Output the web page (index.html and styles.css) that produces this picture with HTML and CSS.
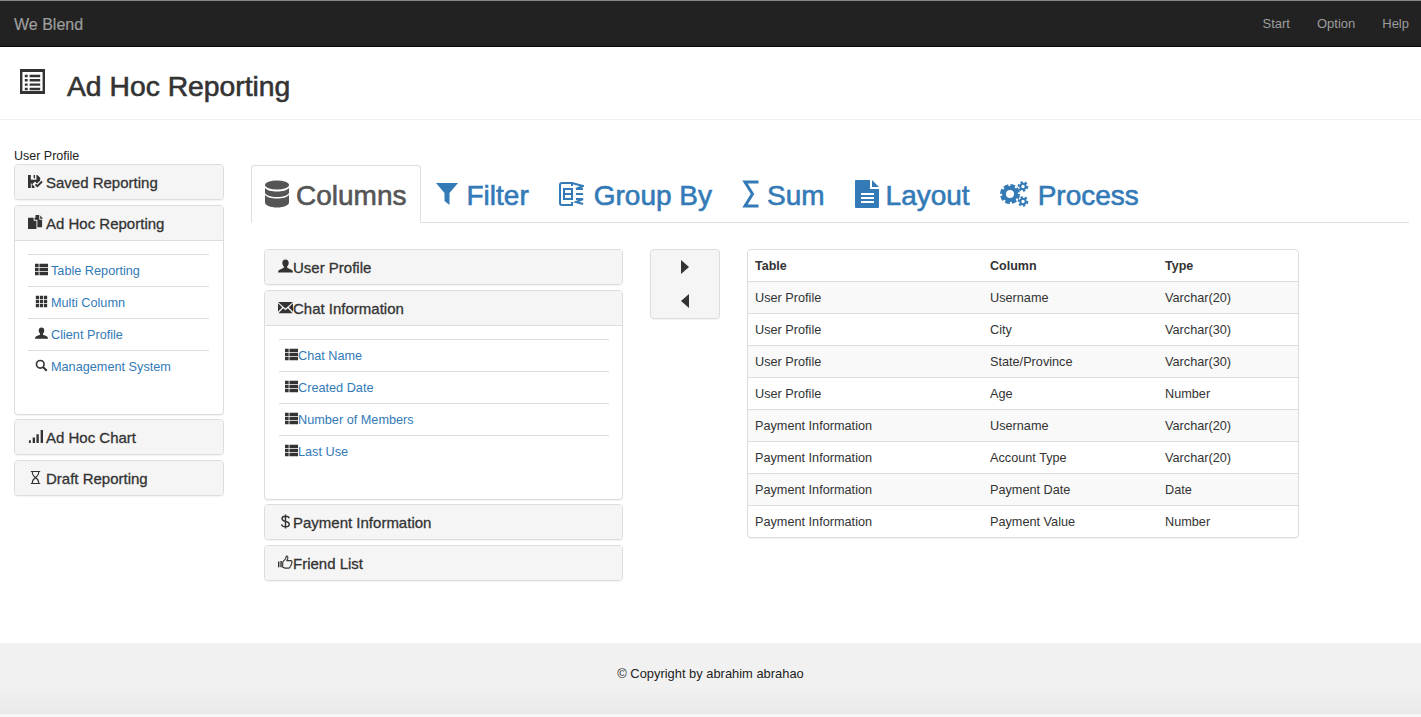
FILE: index.html
```html
<!DOCTYPE html>
<html>
<head>
  <meta charset="UTF-8">
  <title>We Blend</title>
  <link rel="stylesheet" href="styles.css">
</head>
<body>
  <svg class="sprite" width="0" height="0">
    <symbol id="i-listalt" viewBox="0 0 26 26"><path fill-rule="evenodd" d="M0 0h26v26H0zM2.500 3v20h21V3z"/><path d="M5 6h3v2.500H5zM10 6h11v2.500H10zM5 10.500h3V13H5zM10 10.500h11V13H10zM5 15h3v2.500H5zM10 15h11v2.500H10zM5 19.500h3V22H5zM10 19.500h11V22H10z"/></symbol>
    <symbol id="i-saved" viewBox="0 0 16 16"><path d="M0 1h10l3 3v3l-3.500 3L7.500 8 4.500 11l2.500 2.500V15H4V10H3v5H0zM3 1v5h6V1H7.500v3.500H6V1z" fill-rule="evenodd"/><path d="M8 11l2 2 5-5" fill="none" stroke="currentColor" stroke-width="2"/></symbol>
    <symbol id="i-copy" viewBox="0 0 16 16"><path d="M0 3h6v3h3v9H0z"/><path d="M7 3v2h3v8h5V5h-3V0H8v3zM13 .5V4h3z"/></symbol>
    <symbol id="i-thlist" viewBox="0 0 16 16"><path d="M0 1h4.500v4.200H0zM5.500 1H16v4.200H5.500zM0 6h4.500v4.200H0zM5.500 6H16v4.200H5.500zM0 11h4.500v4.200H0zM5.500 11H16v4.200H5.500z"/></symbol>
    <symbol id="i-th" viewBox="0 0 16 16"><path d="M1 1h4v4.200H1zM6 1h4v4.200H6zM11 1h4v4.200h-4zM1 6h4v4.200H1zM6 6h4v4.200H6zM11 6h4v4.200h-4zM1 11h4v4.200H1zM6 11h4v4.200H6zM11 11h4v4.200h-4z"/></symbol>
    <symbol id="i-user" viewBox="0 0 16 16"><path d="M8 .5c2.200 0 3.400 1.500 3.400 3.700 0 1.600-.7 3-1.600 3.700v1.500l4 1.700c1.300.6 2.200 1.200 2.200 3.400H0c0-2.200.9-2.800 2.200-3.400l4-1.700V7.900c-.9-.7-1.600-2.100-1.600-3.700C4.600 2 5.800.5 8 .5z"/></symbol>
    <symbol id="i-search" viewBox="0 0 16 16"><circle cx="6.500" cy="6.500" r="4.700" fill="none" stroke="currentColor" stroke-width="2"/><path d="M10 10l4.500 4.500" fill="none" stroke="currentColor" stroke-width="2.600"/></symbol>
    <symbol id="i-signal" viewBox="0 0 16 16"><path d="M1 12h2v3H1zM5 9h2.500v6H5zM9 5.500h2.500V15H9zM13.500 1H16v14h-2.500z"/></symbol>
    <symbol id="i-hourglass" viewBox="0 0 16 16"><path d="M3 1h10v1.200h-1c0 3-1.500 4.500-3 5.800 1.500 1.300 3 2.800 3 5.800h1V15H3v-1.200h1c0-3 1.500-4.500 3-5.800-1.500-1.300-3-2.800-3-5.800H3zM5.200 2.200C5.200 5 6.700 6.300 8 7.300c1.300-1 2.800-2.300 2.800-5.100zM8 9c-1 .8-2.500 2-2.800 4.800h5.600C10.500 11 9 9.800 8 9z" fill-rule="evenodd"/></symbol>
    <symbol id="i-database" viewBox="0 0 24 27"><ellipse cx="12" cy="4.500" rx="12" ry="4.500"/><path d="M0 7.500C2 10 6.500 11 12 11s10-1 12-3.500V12c0 2.500-5.400 4.500-12 4.500S0 14.500 0 12zM0 14.500C2 17 6.500 18 12 18s10-1 12-3.500V22c0 2.800-5.400 5-12 5S0 24.800 0 22z"/></symbol>
    <symbol id="i-filter" viewBox="0 0 22 24"><path d="M0 1h22l-8.500 10v12L8.500 19v-8z"/></symbol>
    <symbol id="i-group" viewBox="0 0 25 24"><g fill="none" stroke="currentColor" stroke-width="2"><path d="M13 4V1H3a2 2 0 0 0-2 2v18a2 2 0 0 0 2 2h10v-3"/><path d="M5 7h8v10H5zM5 12h8"/><path d="M13 1l11 3-7 3h7M24 12h-7M17 17h7l-7 3 7 2"/></g></symbol>
    <symbol id="i-sigma" viewBox="0 0 17 28"><path d="M16.500 2H3l7.500 12L3 26h13.500" fill="none" stroke="currentColor" stroke-width="3"/></symbol>
    <symbol id="i-file" viewBox="0 0 24 28"><path fill-rule="evenodd" d="M1 0h14v9h9v18a1 1 0 0 1-1 1H1a1 1 0 0 1-1-1V1a1 1 0 0 1 1-1zM6 13v2h13v-2zM6 17v2h13v-2zM6 21v2h13v-2z"/><path d="M17 0l7 7h-7z"/></symbol>
    <symbol id="i-cogs" viewBox="0 0 30 26"><g fill="none" stroke="currentColor"><circle cx="10" cy="13" r="6" stroke-width="4"/><circle cx="10" cy="13" r="8.500" stroke-width="3" stroke-dasharray="4.700 2"/><circle cx="23" cy="5.500" r="2.700" stroke-width="2"/><circle cx="23" cy="5.500" r="4.300" stroke-width="2" stroke-dasharray="2.300 2"/><circle cx="23" cy="20.500" r="2.700" stroke-width="2"/><circle cx="23" cy="20.500" r="4.300" stroke-width="2" stroke-dasharray="2.300 2"/></g></symbol>
    <symbol id="i-mail" viewBox="0 0 16 16"><path d="M0 2h16L8 9zM0 3.500l4.500 4.200L0 12.500zM16 3.500l-4.500 4.200 4.500 4.800zM5.500 8.700L8 11l2.500-2.300 5 5.300H.5z"/></symbol>
    <symbol id="i-usd" viewBox="0 0 16 16"><path d="M12 4.500C11.500 3 10 2.400 8 2.400c-2.300 0-3.700 1-3.700 2.700 0 3.900 7.700 1.700 7.700 5.800 0 1.800-1.700 2.800-4 2.800-2.300 0-3.800-.9-4.300-2.600M8 .5v15" fill="none" stroke="currentColor" stroke-width="1.500"/></symbol>
    <symbol id="i-thumb" viewBox="0 0 16 16"><path d="M0 7h1.500v6H0zM2.500 6.500h1.500V13H2.500z"/><path d="M5 7.500l3-3.500c.5-1 .5-2 1-3 1.500 0 1.800 1.500 1.300 3l-.8 2h4c1.500 0 1.800 1.500 1 2.300.5 1 0 1.800-.5 2.200 0 1-.5 1.500-1 1.800 0 1-.7 1.700-1.500 1.700H7.500L5 13z" fill="none" stroke="currentColor" stroke-width="1.200"/></symbol>
    <symbol id="i-right" viewBox="0 0 8 14"><path d="M0 0l8 7-8 7z"/></symbol>
    <symbol id="i-left" viewBox="0 0 8 14"><path d="M8 0L0 7l8 7z"/></symbol>
  </svg>

  <nav class="navbar">
    <a class="brand">We Blend</a>
    <ul class="navlinks">
      <li>Start</li>
      <li>Option</li>
      <li>Help</li>
    </ul>
  </nav>

  <header class="pagehead">
    <svg class="pagehead-icon"><use href="#i-listalt"/></svg>
    <h1>Ad Hoc Reporting</h1>
  </header>

  <main class="main">
    <aside class="sidebar">
      <div class="sidebar-title">User Profile</div>
      <div class="panel">
        <div class="panel-heading"><svg class="ico ico-gap"><use href="#i-saved"/></svg>Saved Reporting</div>
      </div>
      <div class="panel panel-open">
        <div class="panel-heading"><svg class="ico ico-gap"><use href="#i-copy"/></svg>Ad Hoc Reporting</div>
        <div class="panel-body">
          <ul class="linklist">
            <li><svg class="ico-sm ico-gap"><use href="#i-thlist"/></svg><a>Table Reporting</a></li>
            <li><svg class="ico-sm ico-gap"><use href="#i-th"/></svg><a>Multi Column</a></li>
            <li><svg class="ico-sm ico-gap"><use href="#i-user"/></svg><a>Client Profile</a></li>
            <li><svg class="ico-sm ico-gap"><use href="#i-search"/></svg><a>Management System</a></li>
          </ul>
        </div>
      </div>
      <div class="panel">
        <div class="panel-heading"><svg class="ico ico-gap"><use href="#i-signal"/></svg>Ad Hoc Chart</div>
      </div>
      <div class="panel">
        <div class="panel-heading"><svg class="ico ico-gap"><use href="#i-hourglass"/></svg>Draft Reporting</div>
      </div>
    </aside>

    <section class="content">
      <ul class="tabs">
        <li class="tab active"><svg class="tab-ico"><use href="#i-database"/></svg>Columns</li>
        <li class="tab"><svg class="tab-ico tab-ico-filter"><use href="#i-filter"/></svg>Filter</li>
        <li class="tab"><svg class="tab-ico tab-ico-group"><use href="#i-group"/></svg>Group By</li>
        <li class="tab"><svg class="tab-ico tab-ico-sigma"><use href="#i-sigma"/></svg>Sum</li>
        <li class="tab"><svg class="tab-ico tab-ico-file"><use href="#i-file"/></svg>Layout</li>
        <li class="tab"><svg class="tab-ico tab-ico-cogs"><use href="#i-cogs"/></svg>Process</li>
      </ul>

      <div class="pane">
        <div class="accordion">
          <div class="panel">
            <div class="panel-heading"><svg class="ico"><use href="#i-user"/></svg>User Profile</div>
          </div>
          <div class="panel panel-open">
            <div class="panel-heading"><svg class="ico"><use href="#i-mail"/></svg>Chat Information</div>
            <div class="panel-body">
              <ul class="linklist">
                <li><svg class="ico-sm"><use href="#i-thlist"/></svg><a>Chat Name</a></li>
                <li><svg class="ico-sm"><use href="#i-thlist"/></svg><a>Created Date</a></li>
                <li><svg class="ico-sm"><use href="#i-thlist"/></svg><a>Number of Members</a></li>
                <li><svg class="ico-sm"><use href="#i-thlist"/></svg><a>Last Use</a></li>
              </ul>
            </div>
          </div>
          <div class="panel">
            <div class="panel-heading"><svg class="ico"><use href="#i-usd"/></svg>Payment Information</div>
          </div>
          <div class="panel">
            <div class="panel-heading"><svg class="ico"><use href="#i-thumb"/></svg>Friend List</div>
          </div>
        </div>

        <div class="transfer">
          <svg class="arrow"><use href="#i-right"/></svg>
          <svg class="arrow"><use href="#i-left"/></svg>
        </div>

        <div class="tablebox">
          <table>
            <thead>
              <tr><th class="col1">Table</th><th class="col2">Column</th><th>Type</th></tr>
            </thead>
            <tbody>
              <tr><td>User Profile</td><td>Username</td><td>Varchar(20)</td></tr>
              <tr><td>User Profile</td><td>City</td><td>Varchar(30)</td></tr>
              <tr><td>User Profile</td><td>State/Province</td><td>Varchar(30)</td></tr>
              <tr><td>User Profile</td><td>Age</td><td>Number</td></tr>
              <tr><td>Payment Information</td><td>Username</td><td>Varchar(20)</td></tr>
              <tr><td>Payment Information</td><td>Account Type</td><td>Varchar(20)</td></tr>
              <tr><td>Payment Information</td><td>Payment Date</td><td>Date</td></tr>
              <tr><td>Payment Information</td><td>Payment Value</td><td>Number</td></tr>
            </tbody>
          </table>
        </div>
      </div>
    </section>
  </main>

  <footer class="footer">© Copyright by abrahim abrahao</footer>
</body>
</html>
```

FILE: styles.css
```css
*{
  box-sizing: border-box;
}
html, body{
  height: 100%;
}
body{
  margin: 0;
  display: flex;
  flex-direction: column;
  overflow: hidden;
  font-family: "Liberation Sans", Arial, sans-serif;
  font-size: 12.700px;
  color: #333;
  background-color: #fff;
}
ul{
  list-style: none;
  margin: 0;
  padding: 0;
}
svg{
  fill: currentColor;
}
.sprite{
  position: absolute;
}

/* top bar */
.navbar{
  height: 47px;
  flex: none;
  display: flex;
  align-items: center;
  justify-content: space-between;
  padding: 0 12px 1px 14px;
  background-color: #222;
  border-top: 1px solid #888;
  border-bottom: 1px solid #080808;
  color: #9d9d9d;
}
.brand{
  margin-top: 3px;
  font-size: 16px;
  -webkit-text-stroke: 0.2px #9d9d9d;
}
.navlinks{
  display: flex;
  gap: 27px;
  font-size: 13px;
}

/* title */
.pagehead{
  height: 73px;
  flex: none;
  display: flex;
  align-items: center;
  padding: 6px 0 0 20px;
  border-bottom: 1px solid #eee;
}
.pagehead-icon{
  width: 25px;
  height: 27px;
  margin: -9px 22px 0 0;
}
.pagehead h1{
  margin: 0;
  font-size: 28.300px;
  font-weight: normal;
  -webkit-text-stroke: 0.6px #333;
}

/* columns of the page */
.main{
  flex: 1;
  display: flex;
  gap: 27px;
  padding: 29px 12px 0 14px;
}
.sidebar{
  width: 210px;
  flex: none;
}
.sidebar-title{
  font-size: 12.500px;
  line-height: 15px;
  color: #222;
}
.content{
  flex: 1;
  padding-top: 16px;
}

/* panels */
.panel{
  margin-bottom: 5px;
  border: 1px solid #ddd;
  border-radius: 4px;
  background-color: #fff;
  box-shadow: 0 1px 1px rgba(0,0,0,.05);
}
.panel-open{
  margin-bottom: 4px;
}
.panel-heading{
  height: 34px;
  display: flex;
  align-items: center;
  padding-left: 13px;
  background-color: #f5f5f5;
  border-radius: 3px;
  font-size: 15px;
  color: #333;
  -webkit-text-stroke: 0.3px #333;
}
.panel-body{
  height: 174px;
  padding: 13px 14px 0 13px;
  border-top: 1px solid #ddd;
}
.accordion .panel-body{
  padding: 13px 13px 0 14px;
}
.ico{
  width: 15px;
  height: 15px;
  flex: none;
  margin-top: -1px;
}
.ico-gap{
  margin-right: 3px;
}
.ico-sm{
  width: 13px;
  height: 13px;
  flex: none;
  margin-top: -2px;
  color: #333;
}
.linklist li{
  height: 32px;
  display: flex;
  align-items: center;
  padding-left: 7px;
  border-top: 1px solid #ddd;
}
.accordion .linklist li{
  padding-left: 6px;
}
.linklist a{
  color: #337ab7;
}

/* tabs */
.tabs{
  display: flex;
  height: 58px;
  border-bottom: 1px solid #ddd;
}
.tab{
  height: 57px;
  display: flex;
  align-items: center;
  gap: 8px;
  padding: 4px 15px 0;
  font-size: 28px;
  color: #337ab7;
  -webkit-text-stroke: 0.6px currentColor;
}
.tab.active{
  height: 58px;
  gap: 7px;
  padding: 3px 14px 0 13px;
  color: #555;
  background-color: #fff;
  border: 1px solid #ddd;
  border-bottom-color: #fff;
  border-radius: 4px 4px 0 0;
}
.tab-ico{
  width: 24px;
  height: 28px;
  flex: none;
  margin-top: -4px;
}
.tab-ico-filter{
  width: 22px;
}
.tab-ico-group{
  width: 25px;
  margin-right: 2px;
}
.tab-ico-sigma{
  width: 17px;
}
.tab-ico-file{
  margin-right: -1px;
}
.tab-ico-cogs{
  width: 30px;
}

/* tab content */
.pane{
  display: flex;
  align-items: flex-start;
  gap: 27px;
  padding: 26px 0 0 13px;
}
.accordion{
  width: 359px;
  flex: none;
}
.transfer{
  width: 70px;
  height: 70px;
  flex: none;
  display: flex;
  flex-direction: column;
  align-items: center;
  gap: 20px;
  padding-top: 10px;
  background-color: #f5f5f5;
  border: 1px solid #ddd;
  border-radius: 4px;
  box-shadow: 0 1px 1px rgba(0,0,0,.05);
}
.arrow{
  width: 8px;
  height: 14px;
  flex: none;
}
.tablebox{
  width: 552px;
  flex: none;
  border: 1px solid #ddd;
  border-radius: 4px;
  box-shadow: 0 1px 1px rgba(0,0,0,.05);
  overflow: hidden;
}
table{
  width: 100%;
  border-collapse: collapse;
  table-layout: fixed;
}
th, td{
  height: 32px;
  padding: 1px 7px 0;
  text-align: left;
  border-top: 1px solid #ddd;
}
th{
  height: 31px;
  padding-top: 2px;
  font-size: 12.500px;
  border-top: 0;
}
.col1{
  width: 235px;
}
.col2{
  width: 175px;
}
tbody tr:nth-child(odd){
  background-color: #f9f9f9;
}

/* bottom */
.footer{
  height: 74px;
  flex: none;
  padding-top: 23px;
  text-align: center;
  font-size: 12.900px;
  line-height: 15px;
  color: #222;
  background: linear-gradient(#f1f1f1 0, #f1f1f1 60%, #e9e9e9 96%, #f6f6f6 96%);
}
```
